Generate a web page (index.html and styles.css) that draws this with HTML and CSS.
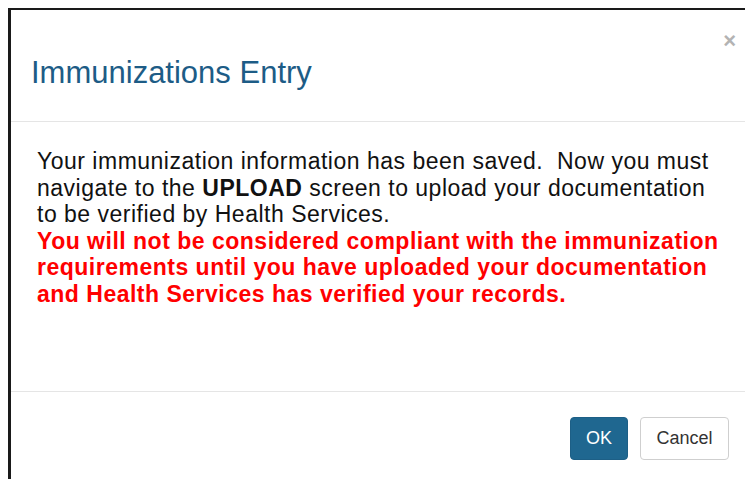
FILE: index.html
```html
<!DOCTYPE html>
<html lang="en">
<head>
<meta charset="utf-8">
<title>Immunizations Entry</title>
<link rel="stylesheet" href="styles.css">
</head>
<body>
<div class="modal">
  <div class="modal-header">
    <h4 class="modal-title">Immunizations Entry</h4>
    <button class="close" type="button" aria-label="Close">&times;</button>
  </div>
  <div class="modal-body">
    <p class="msg">Your immunization information has been saved.&nbsp; Now you must navigate to the <b>UPLOAD</b> screen to upload your documentation to be verified by Health Services.</p>
    <p class="warn">You will not be considered compliant with the immunization requirements until you have uploaded your documentation and Health Services has verified your records.</p>
  </div>
  <div class="modal-footer">
    <button class="btn btn-primary" type="button">OK</button>
    <button class="btn btn-default" type="button">Cancel</button>
  </div>
</div>
</body>
</html>
```

FILE: styles.css
```css
html, body {
  margin: 0;
  height: 100%;
  background: #fff;
  overflow: hidden;
}

body {
  padding: 8px 0 0 8px;
  box-sizing: border-box;
  font-family: "Liberation Sans", Arial, sans-serif;
}

.modal {
  height: 100%;
  background: #fff;
  border-top: 2px solid #1a1a1a;
  border-left: 3px solid #1a1a1a;
  display: flex;
  flex-direction: column;
}

.modal-header {
  position: relative;
  flex: none;
  height: 112px;
  box-sizing: border-box;
  border-bottom: 1px solid #e5e5e5;
  padding: 47px 20px 0 20px;
}

.modal-title {
  margin: 0;
  font-weight: normal;
  font-size: 31px;
  line-height: 32px;
  color: #1d5c86;
}

.close {
  position: absolute;
  top: 20px;
  right: 9px;
  padding: 0;
  border: 0;
  background: none;
  font-family: "Liberation Sans", Arial, sans-serif;
  font-size: 22px;
  font-weight: bold;
  line-height: 1;
  color: #b3b3b3;
}

.modal-body {
  flex: none;
  height: 270px;
  box-sizing: border-box;
  border-bottom: 1px solid #e5e5e5;
  padding: 26px 17px 0 26px;
  font-size: 23px;
  line-height: 26.5px;
  letter-spacing: 0.5px;
}

.modal-body p {
  margin: 0;
}

.msg {
  color: #111;
}

.warn {
  color: #ff0000;
  font-weight: bold;
}

.modal-footer {
  display: flex;
  justify-content: flex-end;
  gap: 12px;
  padding: 25px 16px 0 0;
}

.btn {
  height: 43px;
  border-radius: 4px;
  font-family: "Liberation Sans", Arial, sans-serif;
  font-size: 18px;
  padding: 0;
}

.btn-primary {
  width: 58px;
  background: #1f6790;
  border: 1px solid #1d5f86;
  color: #fff;
}

.btn-default {
  width: 89px;
  background: #fff;
  border: 1px solid #cfcfcf;
  color: #333;
}
```
